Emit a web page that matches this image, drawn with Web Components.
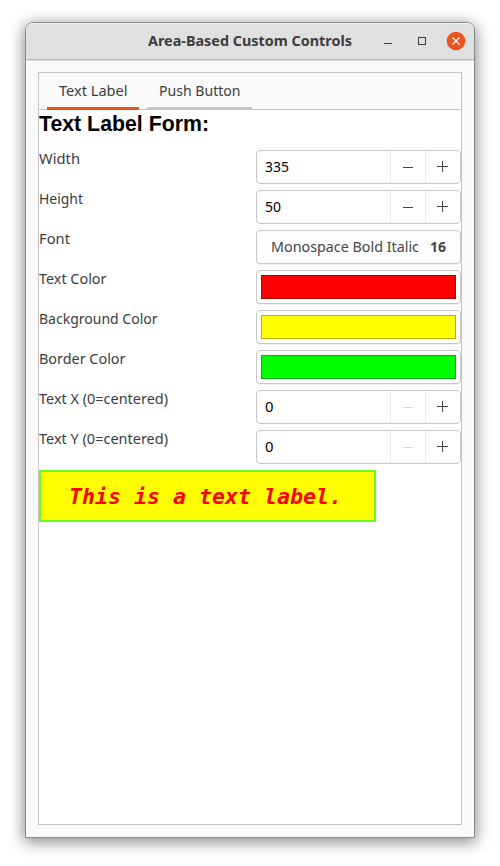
<!DOCTYPE html>
<html lang="en"><head><meta charset="utf-8"><title>Area-Based Custom Controls</title>
<style>
html,body{margin:0;width:500px;height:866px;overflow:hidden;background:#fff}
body{font-family:"Noto Sans","Open Sans",sans-serif;font-size:14.3px;color:#3d3d3d}
</style></head><body>
<app-window heading="Area-Based Custom Controls">
<tab-book>
<form-heading><fit-text w="170">Text Label Form:</fit-text></form-heading>
<form-row label="Width" w="41"><spin-box value="335" w="24"></spin-box></form-row>
<form-row label="Height" w="44"><spin-box value="50" w="16"></spin-box></form-row>
<form-row label="Font" w="31"><font-button></font-button></form-row>
<form-row label="Text Color" w="67.5"><color-button style="--fill:#f00;--edge:#b30000"></color-button></form-row>
<form-row label="Background Color" w="118.5"><color-button style="--fill:#ff0;--edge:#b3b300"></color-button></form-row>
<form-row label="Border Color" w="86.5"><color-button style="--fill:#0f0;--edge:#00b300"></color-button></form-row>
<form-row label="Text X (0=centered)" w="129"><spin-box value="0" w="8.5" minimum></spin-box></form-row>
<form-row label="Text Y (0=centered)" w="129"><spin-box value="0" w="8.5" minimum></spin-box></form-row>
<text-label><fit-text w="273">This is a text label.</fit-text></text-label>
</tab-book>
</app-window>
<script>
function define(name, render, ready){
  customElements.define(name, class extends HTMLElement{
    connectedCallback(){
      if(this.shadowRoot) return;
      this.attachShadow({mode:'open'}).innerHTML = render(this);
      if(ready) ready(this);
    }
  });
}
define('window-controls', () => `<style>
:host{display:flex;align-items:center;height:36px}
svg{display:block}
</style><svg width="84" height="36" viewBox="0 0 84 36">
<path d="M2 20.5h8" stroke="#3d3d3d"/>
<rect x="36.5" y="14.5" width="7" height="7" fill="none" stroke="#3d3d3d"/>
<circle cx="74" cy="18" r="9.3" fill="#e95420"/>
<path d="M70.5 14.5l7 7m0-7l-7 7" stroke="#fff" stroke-width="1.3"/>
</svg>`);
define('app-window', el => `<style>
:host{display:flex;flex-direction:column;box-sizing:border-box;width:450px;height:816px;margin:22px 0 0 25px;
 border:1px solid #8b8b8b;border-radius:8px 8px 0 0;background:#fafafa;
 box-shadow:0 3px 15px 1px rgba(0,0,0,.48)}
header{display:grid;grid-template-columns:1fr auto 1fr;align-items:center;height:37px;box-sizing:border-box;flex:none;
 border-top:1px solid #f3f3f3;border-bottom:1px solid #bababa;border-radius:7px 7px 0 0;background:#e0e0e0;box-shadow:0 1px #dedede}
fit-text{grid-column:2;font-weight:700;margin-top:-1px}
window-controls{justify-self:end;margin:-1px 8px 0 0}
main{flex:1;display:flex;padding:12px}
</style><header><fit-text w="204">${el.getAttribute('heading')}</fit-text><window-controls></window-controls></header><main><slot></slot></main>`);
define('tab-button', () => `<style>
:host{display:block;box-sizing:border-box;height:37px;padding:8px 0 0 12px;border-bottom:3px solid #c6c6c6}
:host([selected]){border-color:#e95420}
</style><slot></slot>`);
define('tab-book', () => `<style>
:host{display:flex;flex-direction:column;box-sizing:border-box;width:424px;border:1px solid #c4c4c4;background:#fff}
nav{display:flex;gap:8px;height:37px;box-sizing:border-box;padding-left:8px;background:linear-gradient(#c4c4c4,#c4c4c4) 0 100%/100% 1px no-repeat #fafafa}
tab-button:first-child{width:92px}tab-button:last-child{width:105px}
section{flex:1;display:flex;flex-direction:column}
</style><nav><tab-button selected><fit-text w="68.5">Text Label</fit-text></tab-button><tab-button><fit-text w="81.5">Push Button</fit-text></tab-button></nav><section><slot></slot></section>`);
define('form-heading', () => `<style>
:host{display:block;height:40px;box-sizing:border-box;padding-top:4px;font:bold 21.33px/20px "Liberation Sans",sans-serif;color:#000}
</style><slot></slot>`);
define('form-row', el => `<style>
:host{display:grid;grid-template-columns:217px 205px;height:34px;margin-bottom:6px}
fit-text{margin-top:-1px}
</style><fit-text w="${el.getAttribute('w')}">${el.getAttribute('label')}</fit-text><slot></slot>`);
define('spin-box', el => `<style>
:host{display:grid;grid-template-columns:1fr 35px 35px;box-sizing:border-box;height:34px;border:1px solid #c8c8c8;border-radius:4px;background:#fff;color:#000}
fit-text{margin:6px 0 0 8px}
svg{display:block;border-left:1px solid #ebebeb;box-sizing:border-box;width:35px;height:32px;color:#454545}
:host([minimum]) .minus{color:#dcdcdc}
</style><fit-text w="${el.getAttribute('w')}">${el.getAttribute('value')}</fit-text>
<svg class="minus" viewBox="0 0 34 32"><path d="M12 16.5h10" stroke="currentColor"/></svg>
<svg viewBox="0 0 34 32"><path d="M11 15.5h11M16.5 10v11" stroke="currentColor"/></svg>`);
define('font-button', () => `<style>
:host{display:flex;box-sizing:border-box;height:34px;padding:6px 0 0 14px;gap:11px;border:1px solid #c8c8c8;border-radius:4px;background:#fdfdfd;box-shadow:0 1px #f3f3f3;color:#454545}
b{font-weight:700}
</style><fit-text w="148">Monospace Bold Italic</fit-text><b><fit-text w="16">16</fit-text></b>`);
define('color-button', () => `<style>
:host{display:block;box-sizing:border-box;height:34px;padding:4px;border:1px solid #c8c8c8;border-radius:4px;background:#fff;box-shadow:0 1px #f3f3f3}
div{box-sizing:border-box;width:195px;height:24px;background:var(--fill);border:1px solid var(--edge)}
</style><div></div>`);
define('text-label', () => `<style>
:host{display:block;box-sizing:border-box;width:337px;height:52px;border:2px solid #60ff20;background:#ff0;color:#f00;padding:15px 0 0 28px;font:italic bold 21.33px/20px "DejaVu Sans Mono",monospace}
</style><slot></slot>`);
// Text scaled horizontally to a fixed advance width. Registered last, so that
// the fonts set by the surrounding elements apply when it is measured.
define('fit-text', () => `<style>
:host{display:inline-block;white-space:nowrap;line-height:20px}
span{display:inline-block;transform-origin:0 50%;white-space:pre}
</style><span><slot></slot></span>`, el => {
  const s = el.shadowRoot.querySelector('span'), w = +el.getAttribute('w');
  el.style.width = w + 'px';
  s.style.transform = `scaleX(${w / s.getBoundingClientRect().width})`;
});
</script></body></html>
